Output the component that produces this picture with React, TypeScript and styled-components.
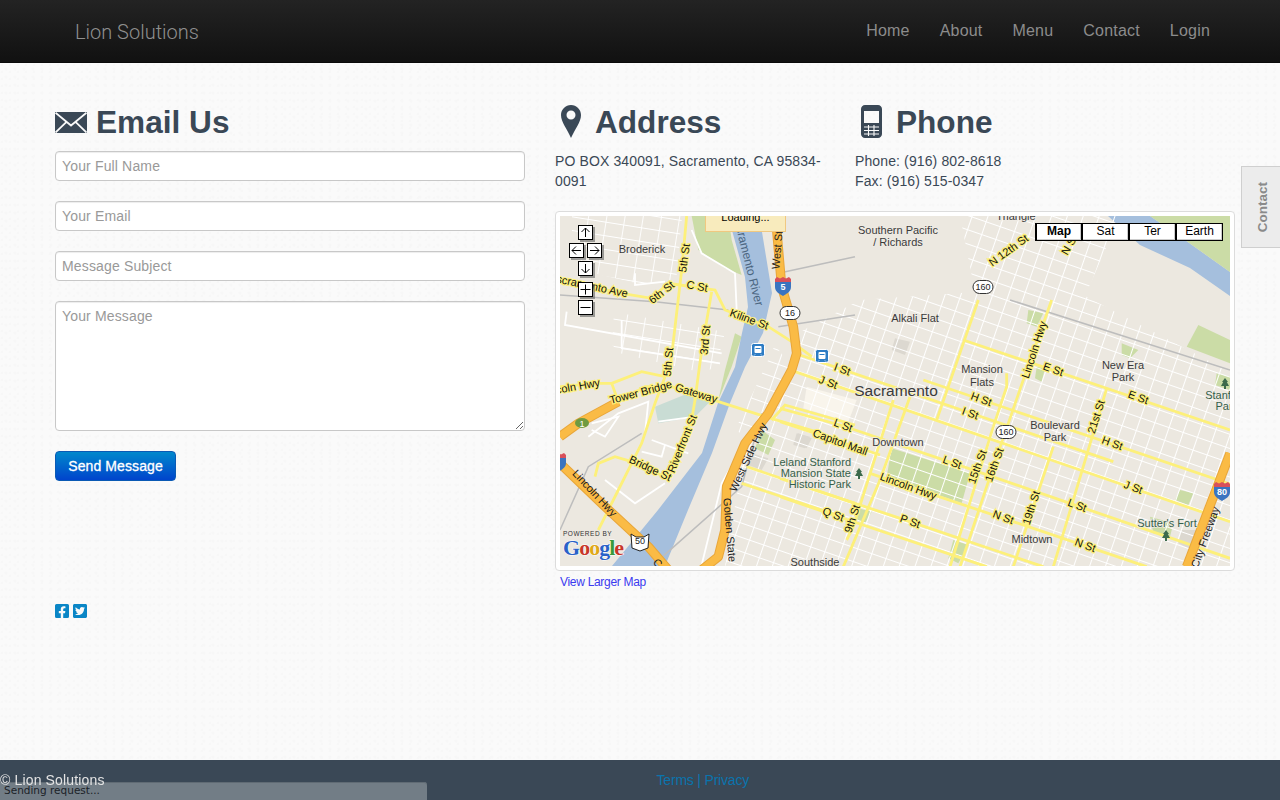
import React from 'react'
import styled, { createGlobalStyle } from 'styled-components'
import { FaFacebookSquare, FaTwitterSquare } from 'react-icons/fa'

const GlobalStyle = createGlobalStyle`
  html, body {
    margin: 0;
    padding: 0;
  }
  body {
    font-family: "Liberation Sans", Arial, sans-serif;
    color: #3a4856;
    background-color: #fafafa;
    background-image:
      radial-gradient(circle at 2px 2px, #f7f7f7 1px, transparent 1.6px),
      radial-gradient(circle at 6px 5px, #f7f7f7 1px, transparent 1.8px);
    background-size: 8px 7px, 9px 8px;
  }
`

const Page = styled.div`
  display: flex;
  flex-direction: column;
  min-height: 100vh;
`

const NavBar = styled.header`
  display: flex;
  align-items: center;
  justify-content: space-between;
  box-sizing: border-box;
  height: 63px;
  padding: 0 70px 0 75px;
  background: linear-gradient(#232323, #111111);
  border-bottom: 1px solid #0a0a0a;
`

const Brand = styled.a`
  padding-top: 2px;
  font: 300 20px Roboto, "Liberation Sans", Arial, sans-serif;
  color: #8f8f8f;
`

const NavLinks = styled.nav`
  display: flex;
  gap: 30px;
`

const NavLink = styled.a`
  font-size: 16px;
  letter-spacing: 0.2px;
  color: #8c8c8c;
`

const Main = styled.main`
  flex: 1;
  padding: 40px 45px 0 55px;
`

const Columns = styled.div`
  display: grid;
  grid-template-columns: 470px 680px;
  gap: 30px;
`

const Heading = styled.h2`
  display: flex;
  align-items: center;
  gap: ${(p: { $gap: number }) => p.$gap}px;
  height: 38px;
  margin: 0 0 10px;
  font-size: 31.6px;
  line-height: 38px;
  font-weight: bold;
  color: #3a4856;
`

const Form = styled.form`
  display: flex;
  flex-direction: column;
  align-items: flex-start;
  gap: 20px;
`

const Field = styled.input`
  box-sizing: border-box;
  width: 470px;
  height: 30px;
  padding: 0 6px;
  font: 14px "Liberation Sans", Arial, sans-serif;
  letter-spacing: 0.15px;
  background: #fff;
  border: 1px solid #c8c8c8;
  border-radius: 4px;
  box-shadow: inset 0 1px 1px rgba(0, 0, 0, 0.075);
  &::placeholder {
    color: #999;
    opacity: 1;
  }
`

const MessageField = styled.textarea`
  box-sizing: border-box;
  display: block;
  width: 470px;
  height: 130px;
  padding: 5px 6px;
  font: 14px/18px "Liberation Sans", Arial, sans-serif;
  letter-spacing: 0.15px;
  background: #fff;
  border: 1px solid #c8c8c8;
  border-radius: 4px;
  box-shadow: inset 0 1px 1px rgba(0, 0, 0, 0.075);
  &::placeholder {
    color: #999;
    opacity: 1;
  }
`

const SendButton = styled.button`
  width: 121px;
  height: 30px;
  padding: 0;
  font: 14px "Liberation Sans", Arial, sans-serif;
  letter-spacing: 0.1px;
  color: #fff;
  -webkit-text-stroke: 0.3px #fff;
  background: linear-gradient(#0088cc, #0044cc);
  border: 1px solid #0a5ab4;
  border-radius: 4px;
`

const InfoRow = styled.div`
  display: grid;
  grid-template-columns: 270px 270px;
  gap: 30px;
`

const InfoText = styled.p`
  margin: 0;
  font-size: 14px;
  line-height: 20px;
  letter-spacing: 0.12px;
  color: #3a4856;
`

const MapCard = styled.div`
  position: relative;
  height: 350px;
  margin-top: 20px;
  padding: 4px;
  background: #fff;
  border: 1px solid #dcdcdc;
  border-radius: 4px;
`

const MapClip = styled.div`
  position: relative;
  width: 670px;
  height: 350px;
  overflow: hidden;
`

const MapDrawing = styled.svg`
  display: block;
  width: 670px;
  height: 350px;
`

const LoadingBubble = styled.div`
  position: absolute;
  left: 145px;
  top: -10px;
  box-sizing: border-box;
  width: 81px;
  height: 26px;
  padding-top: 4px;
  font: 11px "Liberation Sans", Arial, sans-serif;
  text-align: center;
  color: #000;
  background: #f8ebbd;
  border: 1px solid #f0c880;
`

const MapTypes = styled.div`
  position: absolute;
  right: 7px;
  top: 7px;
  display: flex;
`

const MapType = styled.div<{ $active?: boolean }>`
  box-sizing: border-box;
  width: 47px;
  height: 18px;
  font: ${(p) => (p.$active ? 'bold' : 'normal')} 12px/15px "Liberation Sans", Arial, sans-serif;
  text-align: center;
  color: #000;
  background: #fff;
  border: 1px solid #000;
  border-left-width: ${(p) => (p.$active ? 2 : 1)}px;
  border-right-width: 1px;
  box-shadow: inset -1px -1px 0 #ccc;
`

const MapLink = styled.a`
  display: block;
  margin: 4px 0 0 5px;
  font-size: 12px;
  line-height: 14px;
  letter-spacing: -0.3px;
  color: #3a3af0;
`

const Social = styled.div`
  display: flex;
  gap: 4px;
  margin-top: 14px;
  color: #0a86c6;
  svg {
    display: block;
    width: 14px;
    height: 16px;
  }
`

const ContactTab = styled.a`
  position: fixed;
  right: -1px;
  top: 166px;
  box-sizing: border-box;
  display: flex;
  align-items: center;
  justify-content: center;
  width: 40px;
  height: 82px;
  padding-left: 3px;
  font-size: 13.5px;
  font-weight: bold;
  color: #8a8a8a;
  background: #ececec;
  border: 1px solid #cfcfcf;
  span {
    writing-mode: vertical-rl;
    transform: rotate(180deg);
  }
`

const Footer = styled.footer`
  display: flex;
  align-items: center;
  height: 40px;
  font-size: 14px;
  background: #3a4856;
  color: #e4e4e4;
`

const Copyright = styled.span`
  position: relative;
  z-index: 2;
  letter-spacing: 0.15px;
`

const FooterLinks = styled.div`
  margin-left: 552px;
  letter-spacing: -0.2px;
  color: #0a74ad;
`

const StatusBar = styled.div`
  position: fixed;
  left: 0;
  bottom: 0;
  box-sizing: border-box;
  width: 427px;
  height: 18px;
  padding-left: 4px;
  font: 10.5px/17px "DejaVu Sans", sans-serif;
  color: #1c2228;
  background: #727d86;
  border-top-right-radius: 3px;
  box-shadow: inset 0 1px 0 #606b74;
`

const RoadText = styled.text`
  font: 11px "Liberation Sans", Arial, sans-serif;
  fill: #111;
  stroke: #fdf07a;
  stroke-width: 2.4px;
  paint-order: stroke;
  text-anchor: middle;
  dominant-baseline: middle;
`

const PlaceText = styled.text<{ $green?: boolean; $size?: number; $end?: boolean }>`
  font: ${(p) => p.$size || 11}px "Liberation Sans", Arial, sans-serif;
  fill: ${(p) => (p.$green ? '#35604a' : '#3a3a3a')};
  stroke: #efebe4;
  stroke-width: 1.5px;
  paint-order: stroke;
  text-anchor: ${(p) => (p.$end ? 'end' : 'middle')};
  dominant-baseline: middle;
`

const ShieldText = styled.text`
  font: 9px "Liberation Sans", Arial, sans-serif;
  fill: #222;
  text-anchor: middle;
  dominant-baseline: middle;
`

const GoogleText = styled.text`
  font: bold 22px "Liberation Serif", serif;
  letter-spacing: -1px;
  stroke: #fff;
  stroke-width: 1px;
  paint-order: stroke;
`

const PoweredText = styled.text`
  font: 6.5px "Liberation Sans", Arial, sans-serif;
  letter-spacing: 0.5px;
  fill: #333;
`

// coordinates below were read off zoomed crops, so convert back to page pixels
const from = (ox: number, oy: number, list: number[][]) =>
  list.map(([x, y]) => `${ox + x / 3},${oy + y / 3}`).join(' ')
const z7 = (list: number[][]) => from(780, 300, list)
const z8 = (list: number[][]) => from(555, 210, list)
const z9 = (list: number[][]) => from(555, 370, list)

const yellowRoads = [
  z7([[550, 120], [1350, 390]]),
  z7([[430, 240], [1350, 552]]),
  z7([[60, 165], [1000, 485]]),
  z7([[45, 215], [1350, 665]]),
  z7([[0, 325], [190, 378], [515, 488], [890, 617], [1350, 775]]),
  z7([[0, 365], [300, 465]]),
  z7([[270, 520], [1100, 800]]),
  z7([[0, 535], [390, 665], [790, 800]]),
  z7([[0, 590], [160, 645], [620, 800]]),
  z7([[815, 0], [735, 225], [640, 500], [540, 800]]),
  z7([[595, 0], [470, 360]]),
  z7([[640, 380], [510, 800]]),
  z7([[390, 290], [300, 540], [190, 800]]),
  z7([[340, 300], [220, 680], [200, 720]]),
  z7([[980, 265], [820, 800]]),
  z7([[820, 440], [700, 800]]),
  z7([[680, 220], [680, 260], [640, 380]]),
  z8([[395, 18], [380, 180], [345, 480]]),
  z9([[330, 20], [300, 100], [260, 220], [190, 360], [130, 480]]),
  z8([[15, 210], [200, 250], [290, 265], [340, 220], [480, 240], [510, 300], [640, 350], [710, 395], [770, 440]]),
  z8([[470, 245], [440, 420], [420, 570]]),
  z9([[425, 60], [410, 150], [340, 300]]),
  z9([[190, 95], [270, 50], [350, 50], [460, 85], [630, 140], [800, 190], [900, 240]]),
  z9([[170, 40], [260, 5], [330, 20]]),
  z9([[120, 320], [130, 280], [180, 260], [230, 275], [340, 325]]),
  z9([[15, 50], [120, 40], [170, 40], [190, 95]]),
  z9([[650, 150], [690, 105], [900, 165]]),
  z9([[575, 290], [900, 400]]),
  z9([[560, 340], [860, 440]]),
]

const freeways = [
  `${z8([[660, 0], [680, 230], [715, 350], [725, 430]])} ${z9([[710, 0], [640, 130], [570, 220], [515, 350], [510, 480], [490, 560], [440, 600]])}`,
  z9([[15, 280], [150, 410], [280, 530], [340, 600]]),
  z7([[1350, 460], [1220, 800]]),
  z9([[15, 200], [70, 160], [190, 95]]),
]

const rails = [
  z7([[690, 0], [1350, 210]]),
  z8([[15, 255], [300, 275], [520, 300]]),
  z8([[670, 190], [900, 140]]),
  z8([[670, 350], [900, 315]]),
  z9([[15, 480], [100, 290], [260, 190]]),
  z9([[300, 580], [560, 350], [620, 130]]),
]

const whiteRoads = [
  z8([[410, 60], [440, 130], [540, 190], [545, 300]]),
  z8([[35, 305], [30, 345], [500, 430]]),
  z8([[200, 330], [200, 415], [495, 460]]),
  z8([[240, 190], [240, 225], [330, 215]]),
  z9([[100, 200], [190, 130], [280, 95], [270, 190]]),
  z9([[110, 160], [190, 140], [150, 200], [110, 180]]),
  z9([[290, 210], [400, 250]]),
  z9([[260, 245], [320, 260], [330, 225]]),
  z9([[150, 330], [240, 400], [330, 340]]),
  z9([[440, 585], [500, 340], [620, 130]]),
  z9([[310, 155], [420, 140]]),
]

const parks = [
  z7([[335, 445], [570, 520], [545, 610], [320, 530]]),
  z7([[1220, 140], [1255, 75], [1350, 120], [1350, 190]]),
  z7([[745, 30], [790, 40], [770, 80], [740, 70]]),
  z7([[1025, 130], [1075, 150], [1050, 175], [1025, 165]]),
  z7([[1200, 570], [1240, 580], [1225, 615], [1185, 600]]),
  z7([[770, 200], [795, 205], [785, 245], [765, 235]]),
  z7([[1310, 220], [1350, 230], [1350, 270], [1305, 255]]),
  z7([[235, 625], [275, 635], [255, 670], [225, 660]]),
  z7([[520, 720], [565, 735], [535, 790], [505, 775]]),
  z7([[1110, 650], [1180, 670], [1170, 710], [1120, 700]]),
  z8([[410, 18], [520, 18], [530, 90], [560, 195], [510, 175], [430, 120]]),
  z8([[540, 370], [560, 380], [530, 470], [490, 570], [510, 480]]),
  z9([[620, 180], [660, 210], [640, 255], [600, 235]]),
]

const grayBlocks = [
  z7([[345, 115], [390, 125], [375, 165], [335, 150]]),
  z7([[55, 400], [95, 415], [80, 445], [40, 430]]),
  z7([[1205, 690], [1250, 690], [1235, 750], [1195, 730]]),
  z9([[590, 250], [640, 265], [620, 300], [580, 285]]),
  z9([[725, 190], [765, 200], [750, 235], [715, 225]]),
  z9([[300, 110], [400, 70], [470, 90], [420, 140], [310, 160]]),
]

const roadLabels: [string, number, number, number][] = [
  ['I St', 842, 370, 20], ['J St', 828, 383, 20], ['L St', 843, 426, 20],
  ['Capitol Mall', 840, 443, 20], ['Lincoln Hwy', 908, 487, 20], ['L St', 952, 463, 20],
  ['15th St', 978, 467, -70], ['16th St', 995, 465, -70], ['H St', 981, 400, 20],
  ['I St', 970, 414, 20], ['E St', 1053, 370, 20], ['E St', 1138, 398, 20],
  ['21st St', 1097, 417, -72], ['H St', 1112, 444, 20], ['Lincoln Hwy', 1035, 350, -72],
  ['J St', 1133, 488, 20], ['L St', 1077, 506, 20], ['N St', 1003, 518, 20],
  ['19th St', 1032, 508, -72], ['N St', 1085, 546, 20], ['P St', 910, 522, 20],
  ['Q St', 833, 515, 20], ['9th St', 853, 519, -72], ['5th St', 685, 258, -82],
  ['scramento Ave', 592, 287, 12], ['6th St', 662, 293, -38], ['C St', 697, 287, 10],
  ['3rd St', 706, 340, -85], ['Kiline St', 749, 320, 20], ['5th St', 669, 362, -85],
  ['Tower Bridge', 641, 393, -15], ['Gateway', 696, 394, 17], ['coln Hwy', 578, 387, -10],
  ['Riverfront St', 683, 444, -68], ['Bridge St', 650, 469, 25], ['N 12th St', 1009, 251, -36],
  ['N St', 1070, 245, -60],
]

const freewayLabels: [string, number, number, number][] = [
  ['West St', 777, 250, -85], ['Lincoln Hwy', 595, 493, 47], ['West Side Hwy', 748, 457, -65],
  ['Golden State', 730, 530, 85], ['City Freeway', 1205, 537, -70], ['C', 658, 563, 45],
]

const places: [string, number, number][] = [
  ['Alkali Flat', 915, 319], ['Mansion', 982, 370], ['Flats', 982, 383], ['New Era', 1123, 366],
  ['Park', 1123, 378], ['Boulevard', 1055, 426], ['Park', 1055, 438], ['Downtown', 898, 443],
  ['Midtown', 1032, 540], ['Southside', 815, 563], ['Southern Pacific', 898, 231],
  ['/ Richards', 898, 243], ['Triangle', 1016, 217], ['Broderick', 642, 250],
]

const shields: [string, number, number][] = [
  ['160', 983, 287], ['160', 1006, 432], ['16', 790, 313],
]

const pinTrees: [number, number][] = [[859, 474], [1225, 384], [1166, 536]]
const transit: [number, number][] = [[758, 350], [822, 356]]

const PanButton = ({ x, y, d }: { x: number; y: number; d: string }) => (
  <g transform={`translate(${x} ${y})`}>
    <rect x="2" y="2" width="15" height="15" fill="#555" opacity="0.55" />
    <rect x="0.5" y="0.5" width="14" height="14" fill="#fff" stroke="#000" />
    <path d={d} fill="none" stroke="#000" strokeWidth="1" />
  </g>
)

const Shield = ({ label, x, y }: { label: string; x: number; y: number }) => (
  <g>
    <rect x={x - 10} y={y - 6.5} width="20" height="13" rx="6.5" fill="#fff" stroke="#333" />
    <ShieldText x={x} y={y + 0.5}>{label}</ShieldText>
  </g>
)

const Interstate = ({ label, x, y }: { label: string; x: number; y: number }) => (
  <g transform={`translate(${x} ${y})`}>
    <path d="M-8 -7H8V1C8 6 3 8 0 10C-3 8 -8 6 -8 1Z" fill="#3a74c0" />
    <path d="M-8 -7L-6 -9L-3 -7.5L0 -9L3 -7.5L6 -9L8 -7V-4H-8Z" fill="#d8505a" />
    <text x="0" y="4" fontSize="9" fontWeight="bold" fill="#fff" textAnchor="middle" fontFamily="Liberation Sans">{label}</text>
  </g>
)

const TrainBadge = ({ x, y }: { x: number; y: number }) => (
  <g transform={`translate(${x} ${y})`}>
    <rect x="-6.5" y="-6.5" width="13" height="13" rx="2" fill="#2d7cc4" stroke="#fff" />
    <rect x="-3.5" y="-4" width="7" height="7" rx="1" fill="#fff" />
    <path d="M-3 4.5L-4 5.5M3 4.5L4 5.5" stroke="#fff" />
    <path d="M-2.5 -1.5H2.5" stroke="#2d7cc4" />
  </g>
)

const Tree = ({ x, y }: { x: number; y: number }) => (
  <path transform={`translate(${x} ${y})`} d="M0 -6L3 -2H1.8L4 2H1V5H-1V2H-4L-1.8 -2H-3Z" fill="#3c6a4c" />
)

const CityMap = () => (
  <MapDrawing viewBox="560 216 670 350">
    <defs>
      <pattern id="eastGrid" width="15" height="13.5" patternUnits="userSpaceOnUse" patternTransform="translate(800 300) rotate(19)">
        <path d="M0 0H15M0 0V13.5" stroke="#fff" strokeWidth="2" fill="none" />
      </pattern>
      <pattern id="westGrid" width="18" height="13.5" patternUnits="userSpaceOnUse" patternTransform="translate(570 216) rotate(9)">
        <path d="M0 0H18M0 0V13.5" stroke="#fff" strokeWidth="1.8" fill="none" />
      </pattern>
    </defs>
    <rect x="560" y="216" width="670" height="350" fill="#ece8e0" />
    {parks.map((p) => <polygon key={p} points={p} fill="#cbdca6" />)}
    {grayBlocks.map((p, i) => <polygon key={p} points={p} fill={i === 5 ? '#c9dcd4' : '#dcd8d0'} />)}
    <polygon
      points={z7([[80, 260], [230, 300], [205, 365], [70, 325]])}
      fill="#f9f5ec"
    />
    <polygon
      points="728,216 745,277 748,307 742,333 735,367 718,403 702,453 658,510 612,566 665,566 688,510 712,453 730,403 745,367 763,333 772,293 762,232 758,216"
      fill="#a5bfdd"
    />
    <polygon points="1108,216 1150,216 1185,240 1230,272 1230,296 1190,268 1140,245" fill="#a5bfdd" />
    <polygon points="1150,216 1230,216 1230,272 1185,240" fill="#cbdca6" />
    <polygon
      points="800,332 860,300 975,292 960,216 1120,216 1085,296 1230,372 1230,566 725,566 745,445 790,372"
      fill="url(#eastGrid)"
    />
    <polygon points="752,395 775,345 790,365 752,440 735,430" fill="url(#eastGrid)" />
    <polygon points="572,216 682,216 676,282 640,284 572,268" fill="url(#westGrid)" />
    <polygon points="614,312 725,332 716,368 700,372 622,354 612,345" fill="url(#westGrid)" />
    {whiteRoads.map((p) => <polyline key={p} points={p} fill="none" stroke="#fff" strokeWidth="1.8" />)}
    {rails.map((p) => <polyline key={p} points={p} fill="none" stroke="#bdbdbd" strokeWidth="1.5" />)}
    {yellowRoads.map((p) => <polyline key={p} points={p} fill="none" stroke="#fdf07a" strokeWidth="2.8" />)}
    {freeways.map((p) => <polyline key={p} points={p} fill="none" stroke="#e8a63a" strokeWidth="9.5" strokeLinejoin="round" />)}
    {freeways.map((p) => <polyline key={`${p}c`} points={p} fill="none" stroke="#fabb45" strokeWidth="7.5" strokeLinejoin="round" />)}
    <text x="744" y="260" transform="rotate(76 744 260)" fontSize="12" fill="#4b6580" textAnchor="middle" fontFamily="Liberation Sans">Sacramento River</text>
    {places.map(([t, x, y]) => <PlaceText key={`${t}${x}`} x={x} y={y}>{t}</PlaceText>)}
    <PlaceText x={896} y={392} $size={15.5}>Sacramento</PlaceText>
    <PlaceText x={851} y={463} $green $end>Leland Stanford</PlaceText>
    <PlaceText x={851} y={474} $green $end>Mansion State</PlaceText>
    <PlaceText x={851} y={485} $green $end>Historic Park</PlaceText>
    <PlaceText x={1167} y={524} $green>Sutter's Fort</PlaceText>
    <PlaceText x={1218} y={396} $green>Stanf</PlaceText>
    <PlaceText x={1224} y={407} $green>Par</PlaceText>
    {roadLabels.map(([t, x, y, r]) => (
      <RoadText key={`${t}${x}`} x={x} y={y} transform={`rotate(${r} ${x} ${y})`}>{t}</RoadText>
    ))}
    {freewayLabels.map(([t, x, y, r]) => (
      <text
        key={t}
        x={x}
        y={y + 4}
        transform={`rotate(${r} ${x} ${y})`}
        fontSize="11"
        fill="#222"
        textAnchor="middle"
        fontFamily="Liberation Sans"
      >
        {t}
      </text>
    ))}
    {shields.map(([t, x, y]) => <Shield key={`${t}${x}`} label={t} x={x} y={y} />)}
    <path d="M631 534L636 537H644L649 534L648 548L640 551L632 548Z" fill="#fff" stroke="#222" />
    <ShieldText x={640} y={542}>50</ShieldText>
    <ellipse cx="582" cy="423" rx="7" ry="5" fill="#6f9a40" />
    <text x="582" y="426.5" fontSize="9" fill="#fff" textAnchor="middle" fontFamily="Liberation Sans">1</text>
    <Interstate label="5" x={783} y={286} />
    <Interstate label="80" x={1222} y={491} />
    <Interstate label="" x={558} y={462} />
    {transit.map(([x, y]) => <TrainBadge key={x} x={x} y={y} />)}
    {pinTrees.map(([x, y]) => <Tree key={x} x={x} y={y} />)}
    <PoweredText x={563} y={536}>POWERED BY</PoweredText>
    <GoogleText x={563} y={555}>
      <tspan fill="#2a62c8">G</tspan>
      <tspan fill="#c8362a">o</tspan>
      <tspan fill="#e0a818">o</tspan>
      <tspan fill="#2a62c8">g</tspan>
      <tspan fill="#3a9a3a">l</tspan>
      <tspan fill="#c8362a">e</tspan>
    </GoogleText>
    <PanButton x={578} y={225} d="M7.5 12V3M3.5 7L7.5 3L11.5 7" />
    <PanButton x={569} y={243} d="M12 7.5H3M7 3.5L3 7.5L7 11.5" />
    <PanButton x={587} y={243} d="M3 7.5H12M8 3.5L12 7.5L8 11.5" />
    <PanButton x={578} y={261} d="M7.5 3V12M3.5 8L7.5 12L11.5 8" />
    <PanButton x={578} y={282} d="M2.5 7.5H12.5M7.5 2.5V12.5" />
    <PanButton x={578} y={300} d="M2.5 7.5H12.5" />
  </MapDrawing>
)

const IconSlot = styled.span`
  display: block;
  margin: 0 0 2px 6px;
  height: 33px;
  svg {
    display: block;
  }
`

const MailIcon = () => (
  <svg width="32" height="21" viewBox="0 0 32 21">
    <rect width="32" height="21" fill="#3a4856" />
    <path d="M0.5 0.8L16 13.5L31.5 0.8M0.5 20.5L11.5 9.8M31.5 20.5L20.5 9.8" fill="none" stroke="#fafafa" strokeWidth="1.8" />
  </svg>
)

const PinIcon = () => (
  <IconSlot>
    <svg width="20" height="33" viewBox="0 0 20 33">
      <path
        fillRule="evenodd"
        fill="#3a4856"
        d="M10 0C4.5 0 0 4.5 0 10C0 17 6 24 10 33C14 24 20 17 20 10C20 4.5 15.5 0 10 0ZM10 5.5A4.5 4.5 0 1 1 10 14.5A4.5 4.5 0 1 1 10 5.5Z"
      />
    </svg>
  </IconSlot>
)

const PhoneIcon = () => (
  <IconSlot>
    <svg width="21" height="33" viewBox="0 0 21 33">
      <path
        fillRule="evenodd"
        fill="#3a4856"
        d="M4 0H17C19.2 0 21 1.8 21 4V29C21 31.2 19.2 33 17 33H4C1.8 33 0 31.2 0 29V4C0 1.8 1.8 0 4 0ZM3 6V18H18V6Z"
      />
      <path d="M3 22H18M3 25.5H18M3 29H18M7.5 20V31M13 20V31" stroke="#fafafa" strokeWidth="1.1" />
    </svg>
  </IconSlot>
)

export default function App() {
  return (
    <Page>
      <GlobalStyle />
      <NavBar>
        <Brand>Lion Solutions</Brand>
        <NavLinks>
          <NavLink>Home</NavLink>
          <NavLink>About</NavLink>
          <NavLink>Menu</NavLink>
          <NavLink>Contact</NavLink>
          <NavLink>Login</NavLink>
        </NavLinks>
      </NavBar>
      <Main>
        <Columns>
          <section>
            <Heading $gap={9}><MailIcon />Email Us</Heading>
            <Form>
              <Field placeholder="Your Full Name" />
              <Field placeholder="Your Email" />
              <Field placeholder="Message Subject" />
              <MessageField placeholder="Your Message" />
              <SendButton type="button">Send Message</SendButton>
            </Form>
          </section>
          <section>
            <InfoRow>
              <div>
                <Heading $gap={14}><PinIcon /> Address</Heading>
                <InfoText>PO BOX 340091, Sacramento, CA 95834-<br />0091</InfoText>
              </div>
              <div>
                <Heading $gap={14}><PhoneIcon /> Phone</Heading>
                <InfoText>Phone: (916) 802-8618<br />Fax: (916) 515-0347</InfoText>
              </div>
            </InfoRow>
            <MapCard>
              <MapClip>
                <CityMap />
                <LoadingBubble>Loading...</LoadingBubble>
                <MapTypes>
                  <MapType $active>Map</MapType>
                  <MapType>Sat</MapType>
                  <MapType>Ter</MapType>
                  <MapType>Earth</MapType>
                </MapTypes>
              </MapClip>
            </MapCard>
            <MapLink>View Larger Map</MapLink>
          </section>
        </Columns>
        <Social>
          <FaFacebookSquare />
          <FaTwitterSquare />
        </Social>
      </Main>
      <ContactTab><span>Contact</span></ContactTab>
      <Footer>
        <Copyright>© Lion Solutions</Copyright>
        <FooterLinks>Terms | Privacy</FooterLinks>
      </Footer>
      <StatusBar>Sending request...</StatusBar>
    </Page>
  )
}
